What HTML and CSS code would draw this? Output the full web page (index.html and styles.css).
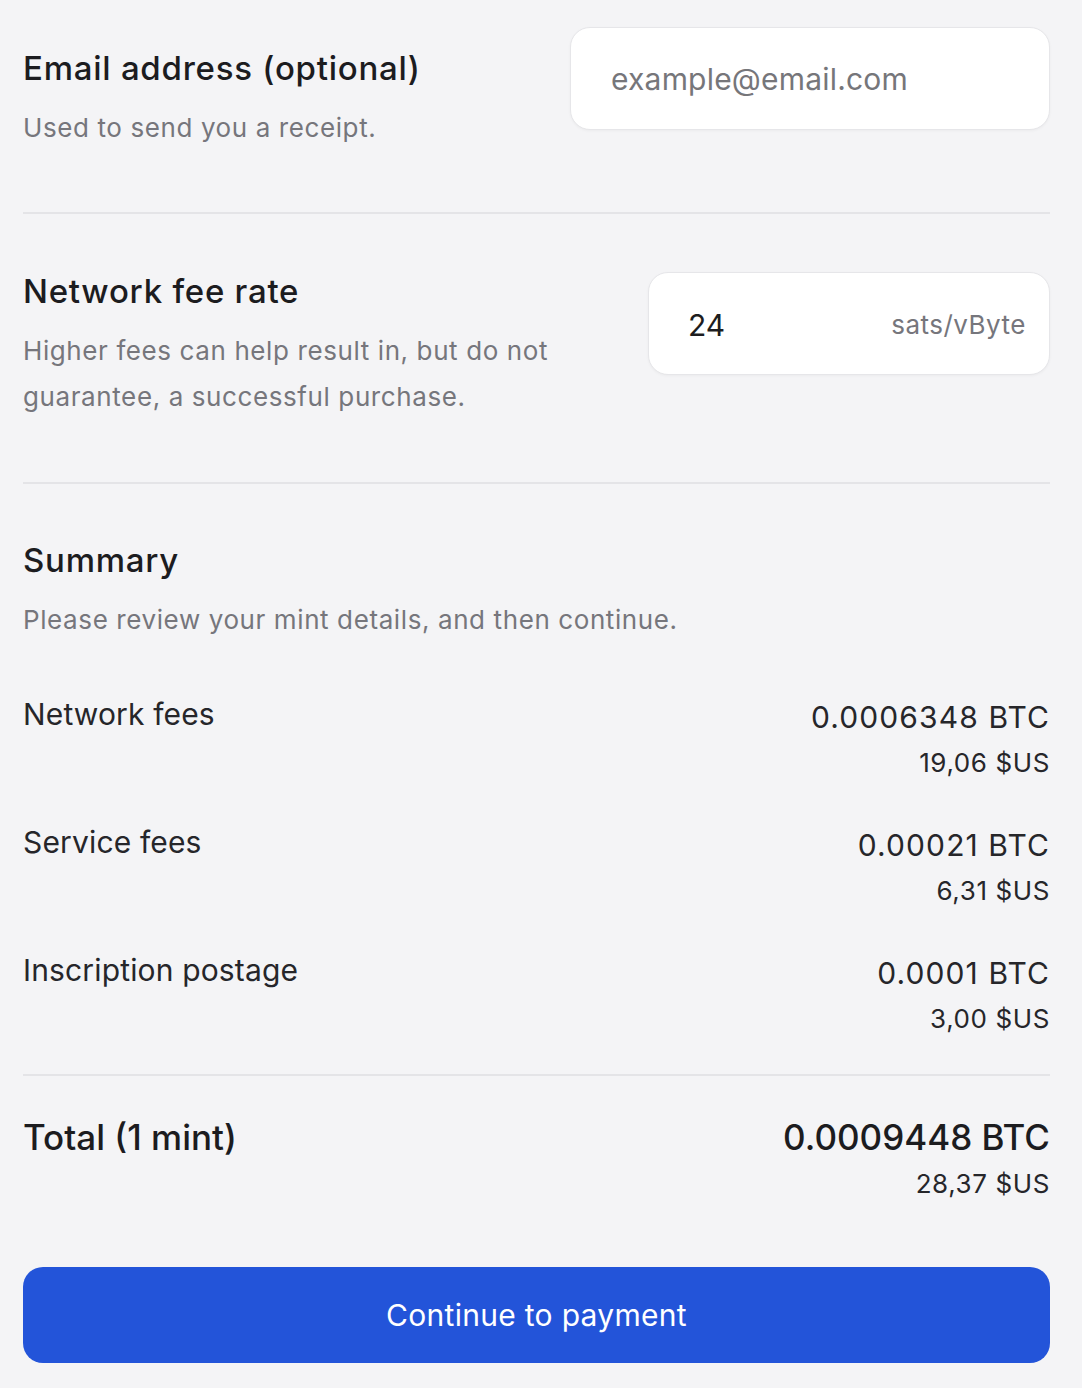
FILE: index.html
```html
<!DOCTYPE html>
<html lang="en">
<head>
<meta charset="utf-8">
<title>Mint checkout</title>
<link rel="stylesheet" href="styles.css">
</head>
<body>
<main class="page">
  <section class="field field-email">
    <div class="field-text">
      <h2 class="title">Email address (optional)</h2>
      <p class="desc">Used to send you a receipt.</p>
    </div>
    <div class="input input-email">
      <span class="placeholder">example@email.com</span>
    </div>
  </section>

  <section class="field field-fee">
    <div class="field-text">
      <h2 class="title">Network fee rate</h2>
      <p class="desc">Higher fees can help result in, but do not<br>guarantee, a successful purchase.</p>
    </div>
    <div class="input input-fee">
      <span class="value">24</span>
      <span class="unit">sats/vByte</span>
    </div>
  </section>

  <section class="summary">
    <h2 class="title">Summary</h2>
    <p class="desc">Please review your mint details, and then continue.</p>
    <div class="rows">
      <div class="row">
        <span class="row-label">Network fees</span>
        <div class="row-amount">
          <span class="btc">0.0006348 BTC</span>
          <span class="usd">19,06 $US</span>
        </div>
      </div>
      <div class="row">
        <span class="row-label">Service fees</span>
        <div class="row-amount">
          <span class="btc">0.00021 BTC</span>
          <span class="usd">6,31 $US</span>
        </div>
      </div>
      <div class="row">
        <span class="row-label">Inscription postage</span>
        <div class="row-amount">
          <span class="btc">0.0001 BTC</span>
          <span class="usd">3,00 $US</span>
        </div>
      </div>
    </div>
  </section>

  <section class="total">
    <span class="total-label">Total (1 mint)</span>
    <div class="row-amount">
      <span class="total-btc">0.0009448 BTC</span>
      <span class="usd">28,37 $US</span>
    </div>
  </section>

  <button class="cta" type="button">Continue to payment</button>
</main>
</body>
</html>
```

FILE: styles.css
```css
* { box-sizing: border-box; }
html, body { margin: 0; padding: 0; }
body {
  background: #f4f4f6;
  font-family: Inter, "Noto Sans", sans-serif;
  color: #1d1d20;
  width: 1082px;
  height: 1388px;
  overflow: hidden;
}
.page {
  padding: 0 32px 0 23px;
  display: flex;
  flex-direction: column;
}
h2, p { margin: 0; }
.title {
  font-size: 33px;
  font-weight: 500;
  line-height: 44px;
  letter-spacing: 0.75px;
  color: #1c1c1f;
}
.desc {
  font-size: 26px;
  line-height: 46px;
  color: #76767c;
  margin-top: 15px;
  letter-spacing: 0.6px;
}
.field {
  display: flex;
  justify-content: space-between;
  align-items: flex-start;
  border-bottom: 2px solid #e4e4e7;
}
.field-email {
  padding-top: 27px;
  padding-bottom: 61px;
}
.field-email .field-text { margin-top: 19px; }
.field-fee {
  padding-top: 55px;
  padding-bottom: 62px;
}
.input {
  background: #fff;
  border: 1px solid #e6e6e9;
  border-radius: 20px;
  height: 103px;
  display: flex;
  align-items: center;
  box-shadow: 0 1px 3px rgba(0,0,0,0.04);
}
.input-email {
  width: 480px;
  padding-left: 40px;
}
.placeholder {
  font-size: 30px;
  letter-spacing: 0.2px;
  color: #76767a;
}
.input-fee {
  width: 402px;
  margin-top: 3px;
  padding: 0 23px 0 39px;
  justify-content: space-between;
}
.input-fee .value {
  font-size: 30px;
  color: #1d1d20;
  padding-top: 2px;
}
.input-fee .unit {
  font-size: 26px;
  letter-spacing: 0.5px;
  color: #76767c;
  padding-top: 2px;
}
.summary {
  padding-top: 54px;
  padding-bottom: 37px;
  border-bottom: 2px solid #e4e4e7;
}
.rows {
  margin-top: 50px;
  display: flex;
  flex-direction: column;
  gap: 40px;
}
.row {
  display: flex;
  justify-content: space-between;
  align-items: flex-start;
}
.row-label {
  font-size: 30px;
  line-height: 40px;
  padding-top: 1px;
  color: #26262a;
  letter-spacing: 0.15px;
}
.row-amount {
  display: flex;
  flex-direction: column;
  align-items: flex-end;
  gap: 8px;
}
.btc {
  font-size: 30px;
  line-height: 40px;
  margin-top: 4px;
  letter-spacing: 1.1px;
  color: #26262a;
}
.usd {
  font-size: 26px;
  line-height: 36px;
  letter-spacing: 0.6px;
  color: #26262a;
}
.total {
  display: flex;
  justify-content: space-between;
  align-items: flex-start;
  padding-top: 39px;
}
.total-label, .total-btc {
  font-size: 35px;
  font-weight: 500;
  line-height: 44px;
  color: #1c1c1f;
}
.total .usd { margin-top: -1px; }
.cta {
  margin-top: 65px;
  height: 96px;
  border: none;
  border-radius: 20px;
  background: #2354d9;
  color: #fff;
  font-family: Inter, "Noto Sans", sans-serif;
  font-size: 30px;
  font-weight: 400;
  letter-spacing: 0.3px;
  width: 100%;
}
```
